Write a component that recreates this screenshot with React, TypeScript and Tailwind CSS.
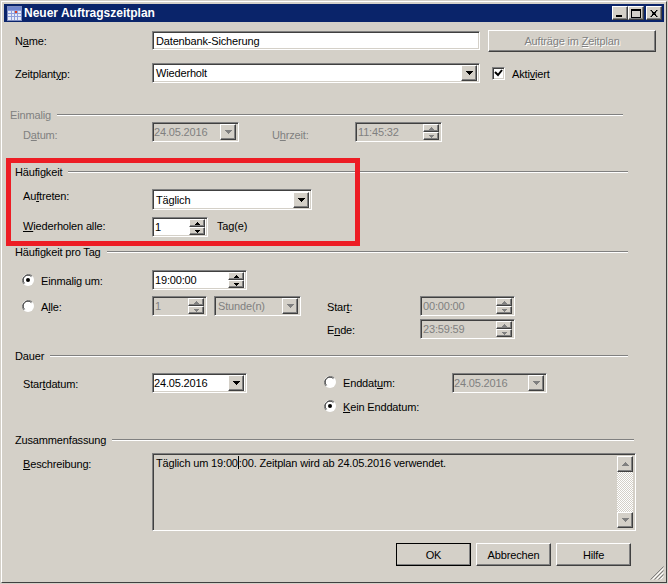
import React from "react";

const sunken = "box-border border border-t-[#808080] border-l-[#808080] border-b-white border-r-white shadow-[inset_1px_1px_0_#404040,inset_-1px_-1px_0_#d4d0c8]";
const raised = "box-border border border-t-white border-l-white border-b-[#404040] border-r-[#404040] bg-[#d4d0c8] shadow-[inset_-1px_-1px_0_#808080]";

function Arrow({ up = false, small = false, off = false }: { up?: boolean; small?: boolean; off?: boolean }) {
  const c = off ? "#808080" : "#000";
  if (small) {
    return (
      <svg width="5" height="3" viewBox="0 0 5 3" className="block">
        <path d={up ? "M2 0h1v1h1v1h1v1H0V2h1V1h1z" : "M0 0h5v1H4v1H3v1H2V2H1V1H0z"} fill={c} />
      </svg>
    );
  }
  return (
    <svg width="7" height="4" viewBox="0 0 7 4" className="block">
      <path d={up ? "M3 0h1v1h1v1h1v1h1v1H0V3h1V2h1V1h1z" : "M0 0h7v1H6v1H5v1H4v1H3V3H2V2H1V1H0z"} fill={c} />
    </svg>
  );
}

function DropBtn({ off = false }: { off?: boolean }) {
  return (
    <div className={`${raised} w-[16px] h-[16px] flex items-center justify-center shrink-0`}>
      <Arrow off={off} />
    </div>
  );
}

function Combo({ w, text, off = false, tall = false, pad = "pl-[1px]" }: { w: string; text: string; off?: boolean; tall?: boolean; pad?: string }) {
  return (
    <div className={`${sunken} ${w} ${tall ? "h-[21px]" : "h-[20px]"} flex items-center p-[2px] ${off ? "bg-[#d4d0c8] text-[#808080]" : "bg-white text-black"}`}>
      <span className={`flex-1 ${pad} whitespace-nowrap overflow-hidden`}>{text}</span>
      <DropBtn off={off} />
    </div>
  );
}

function Spin({ w, text, off = false }: { w: string; text: string; off?: boolean }) {
  return (
    <div className={`${sunken} ${w} h-[20px] flex items-center p-[2px] ${off ? "bg-[#d4d0c8] text-[#808080]" : "bg-white text-black"}`}>
      <span className="flex-1 whitespace-nowrap overflow-hidden">{text}</span>
      <div className="flex flex-col shrink-0 w-[16px] h-[16px]">
        <div className={`${raised} flex-1 flex items-center justify-center`}><Arrow up small off={off} /></div>
        <div className={`${raised} flex-1 flex items-center justify-center`}><Arrow small off={off} /></div>
      </div>
    </div>
  );
}

function Radio({ on = false, cls = "" }: { on?: boolean; cls?: string }) {
  return (
    <svg width="12" height="12" viewBox="0 0 12 12" className={`block shrink-0 ${cls}`}>
      <circle cx="6" cy="6" r="6" fill="#fff" />
      <path d="M1.8 10.2A6 6 0 0 1 10.2 1.8" fill="none" stroke="#808080" strokeWidth="1" />
      <path d="M2.6 9.4A4.8 4.8 0 0 1 9.4 2.6" fill="none" stroke="#404040" strokeWidth="1" />
      {on && <circle cx="6" cy="6" r="2" fill="#000" />}
    </svg>
  );
}

function Legend({ children, end, mt, off = false }: { children: React.ReactNode; end: string; mt: string; off?: boolean }) {
  return (
    <div className={`flex items-center h-[14px] ${mt} ${off ? "pl-[6px] text-[#808080]" : "pl-[11px]"} ${end}`}>
      <span className="whitespace-nowrap mr-[6px]">{children}</span>
      <div className="flex-1 h-[2px] border-t border-t-[#808080] border-b border-b-white" />
    </div>
  );
}

function Label({ children, w = "w-[129px]", off = false, cls = "" }: { children: React.ReactNode; w?: string; off?: boolean; cls?: string }) {
  return <span className={`${w} ${cls} shrink-0 whitespace-nowrap ${off ? "text-[#808080]" : ""}`}>{children}</span>;
}

function DlgBtn({ children, def = false }: { children: React.ReactNode; def?: boolean }) {
  return (
    <div className={`${raised} w-[75px] h-[23px] flex items-center justify-center ${def ? "outline outline-1 -outline-offset-1 outline-black" : ""}`}>
      {children}
    </div>
  );
}

function TitleBtn({ children, cls = "" }: { children: React.ReactNode; cls?: string }) {
  return <div className={`${raised} w-[16px] h-[14px] flex items-center justify-center ${cls}`}>{children}</div>;
}

export default function App() {
  return (
    <div className="w-[668px] h-[584px] bg-[#d4d0c8] p-[1px] box-border relative overflow-hidden text-black text-[11px] leading-[14px] tracking-[-0.16px] [font-family:'Liberation_Sans',Arial,sans-serif]">
      <div className="w-full h-full box-border border border-t-white border-l-white border-b-[#404040] border-r-[#404040] p-[2px] flex flex-col">
        {/* Title bar */}
        <div className="h-[18px] bg-[#0a246a] flex items-center pl-[3px] pr-[2px] shrink-0">
          <svg width="15" height="15" viewBox="0 0 15 15" className="block shrink-0 mr-[2px]">
            <rect x="0.5" y="0.5" width="14" height="14" fill="#e8ecf8" stroke="#7d8cc0" />
            <rect x="1" y="1" width="13" height="3" fill="#6f86cf" />
            <path d="M1 4.5h13M1 7.5h13M1 10.5h13M4.5 4v10M7.5 4v10M10.5 4v10" stroke="#8ea0dc" strokeWidth="1" />
            <rect x="8" y="5" width="2" height="2" fill="#e04020" />
          </svg>
          <span className="font-bold text-white text-[12px] tracking-normal flex-1 whitespace-nowrap">Neuer Auftragszeitplan</span>
          <TitleBtn>
            <div className="w-[6px] h-[2px] bg-black mt-[6px] mr-[2px]" />
          </TitleBtn>
          <TitleBtn>
            <div className="w-[10px] h-[9px] border border-black border-t-2 box-border" />
          </TitleBtn>
          <TitleBtn cls="ml-[2px]">
            <svg width="8" height="7" viewBox="0 0 8 7" className="block"><path d="M0 0h2v1h1v1h2V1h1V0h2L6 2v1L5 3.5 6 4v1l2 2H6V6H5V5H3v1H2v1H0l2-2V4l1-.5L2 3V2z" fill="#000" /></svg>
          </TitleBtn>
        </div>

        {/* Name */}
        <div className="flex items-start h-[22px] mt-[8px] pl-[11px] shrink-0">
          <Label w="w-[137px]"><span className="block mt-[4px]">N<u>a</u>me:</span></Label>
          <div className={`${sunken} w-[328px] h-[19px] mt-[1px] bg-white flex items-center pl-[3px]`}>Datenbank-Sicherung</div>
          <div className={`${raised} w-[168px] h-[22px] ml-[8px] flex items-center justify-center text-[#808080] [text-shadow:1px_1px_0_#fff]`}>
            <span>Aufträge im <u>Z</u>eitplan</span>
          </div>
        </div>

        {/* Zeitplantyp */}
        <div className="flex items-center h-[20px] mt-[11px] pl-[11px] shrink-0">
          <Label w="w-[137px]" cls="mt-[2px]">Zeitplant<u>y</u>p:</Label>
          <Combo w="w-[328px]" text="Wiederholt" />
          <div className={`${sunken} w-[13px] h-[13px] bg-white ml-[12px] flex items-center justify-center`}>
            <svg width="9" height="8" viewBox="0 0 9 8" className="block"><path d="M1 3l3 3 4-5" fill="none" stroke="#000" strokeWidth="2" /></svg>
          </div>
          <span className="ml-[7px] mt-[2px]">Akti<u>v</u>iert</span>
        </div>

        {/* Einmalig */}
        <Legend mt="mt-[25px]" end="pr-[41px]" off>Einmalig</Legend>
        <div className="flex items-center h-[20px] pl-[19px] shrink-0">
          <Label off cls="mt-[6px]">D<u>a</u>tum:</Label>
          <Combo w="w-[87px]" text="24.05.2016" off pad="-ml-px" />
          <Label w="w-[116px] pl-[33px]" off cls="mt-[6px]">U<u>h</u>rzeit:</Label>
          <Spin w="w-[87px]" text="11:45:32" off />
        </div>

        {/* Häufigkeit */}
        <Legend mt="mt-[23px]" end="pr-[36px]">Häufigkeit</Legend>
        <div className="flex items-center h-[21px] mt-[10px] pl-[19px] shrink-0">
          <Label cls="mb-[8px]">Au<u>f</u>treten:</Label>
          <Combo w="w-[160px]" text="Täglich" tall />
        </div>
        <div className="flex items-center h-[20px] mt-[7px] pl-[19px] shrink-0">
          <Label cls="mb-[2px]"><u>W</u>iederholen alle:</Label>
          <Spin w="w-[56px]" text="1" />
          <span className="ml-[9px] mb-[2px]">Tag(e)</span>
        </div>

        {/* Häufigkeit pro Tag */}
        <Legend mt="mt-[8px]" end="pr-[36px]">Häufigkeit pro Tag</Legend>
        <div className="flex items-center h-[20px] mt-[11px] pl-[18px] shrink-0">
          <Radio on />
          <Label w="w-[118px] pl-[7px]" cls="mt-[2px]">Einmali<u>g</u> um:</Label>
          <Spin w="w-[95px]" text="19:00:00" />
        </div>
        <div className="flex items-center h-[20px] mt-[6px] pl-[18px] shrink-0">
          <Radio />
          <Label w="w-[118px] pl-[7px]" cls="mt-[2px]">A<u>l</u>le:</Label>
          <Spin w="w-[55px]" text="1" off />
          <div className="ml-[7px]"><Combo w="w-[87px]" text="Stunde(n)" off /></div>
          <Label w="w-[119px] pl-[26px]" cls="mt-[2px]">Star<u>t</u>:</Label>
          <Spin w="w-[95px]" text="00:00:00" off />
        </div>
        <div className="flex items-center h-[20px] mt-[3px] pl-[323px] shrink-0">
          <Label w="w-[93px]" cls="mt-[2px]">E<u>n</u>de:</Label>
          <Spin w="w-[95px]" text="23:59:59" off />
        </div>

        {/* Dauer */}
        <Legend mt="mt-[10px]" end="pr-[36px]">Dauer</Legend>
        <div className="flex items-center h-[20px] mt-[10px] pl-[19px] shrink-0">
          <Label cls="mt-[2px]">Star<u>t</u>datum:</Label>
          <Combo w="w-[95px]" text="24.05.2016" pad="-ml-px" />
          <div className="ml-[77px] mb-[2px]"><Radio /></div>
          <Label w="w-[116px] pl-[7px]">Enddat<u>u</u>m:</Label>
          <Combo w="w-[95px]" text="24.05.2016" off pad="-ml-px" />
        </div>
        <div className="flex items-center h-[20px] mt-[4px] pl-[320px] shrink-0">
          <Radio on cls="mb-[2px]" />
          <span className="pl-[7px]"><u>K</u>ein Enddatum:</span>
        </div>

        {/* Zusammenfassung */}
        <Legend mt="mt-[16px]" end="pr-[30px]">Zusammenfassung</Legend>
        <div className="flex items-start h-[78px] mt-[6px] pl-[19px] shrink-0">
          <Label><span className="block mt-[4px]"><u>B</u>eschreibung:</span></Label>
          <div className={`${sunken} w-[484px] h-[78px] flex p-[2px]`}>
            <div className="flex-1 pl-[1px] whitespace-nowrap">
              Täglich um 19:00<span className="inline-block w-px h-[13px] bg-black align-[-2px]" />:00. Zeitplan wird ab 24.05.2016 verwendet.
            </div>
            <div className="w-[16px] flex flex-col shrink-0">
              <div className={`${raised} h-[16px] flex items-center justify-center`}><Arrow up off /></div>
              <div className="flex-1 bg-[repeating-conic-gradient(#d4d0c8_0_25%,#fff_0_50%)] bg-[length:2px_2px]" />
              <div className={`${raised} h-[16px] flex items-center justify-center`}><Arrow off /></div>
            </div>
          </div>
        </div>

        {/* Buttons */}
        <div className="flex gap-[5px] mt-[12px] pl-[392px] shrink-0">
          <DlgBtn def>OK</DlgBtn>
          <DlgBtn>Abbrechen</DlgBtn>
          <DlgBtn>Hilfe</DlgBtn>
        </div>
      </div>

      {/* Annotation */}
      <div className="absolute left-[6px] top-[158px] w-[354px] h-[88px] box-border border-[5px] border-[#ed1c24] pointer-events-none" />

      {/* Size grip */}
      <svg width="14" height="14" viewBox="0 0 14 14" className="absolute right-[4px] bottom-[4px] block">
        <path d="M13.5 0.5L0.5 13.5M13.5 4.5L4.5 13.5M13.5 8.5L8.5 13.5" stroke="#808080" strokeWidth="1" />
        <path d="M13.5 2.5L2.5 13.5M13.5 6.5L6.5 13.5M13.5 10.5L10.5 13.5" stroke="#fff" strokeWidth="1" />
      </svg>
    </div>
  );
}
